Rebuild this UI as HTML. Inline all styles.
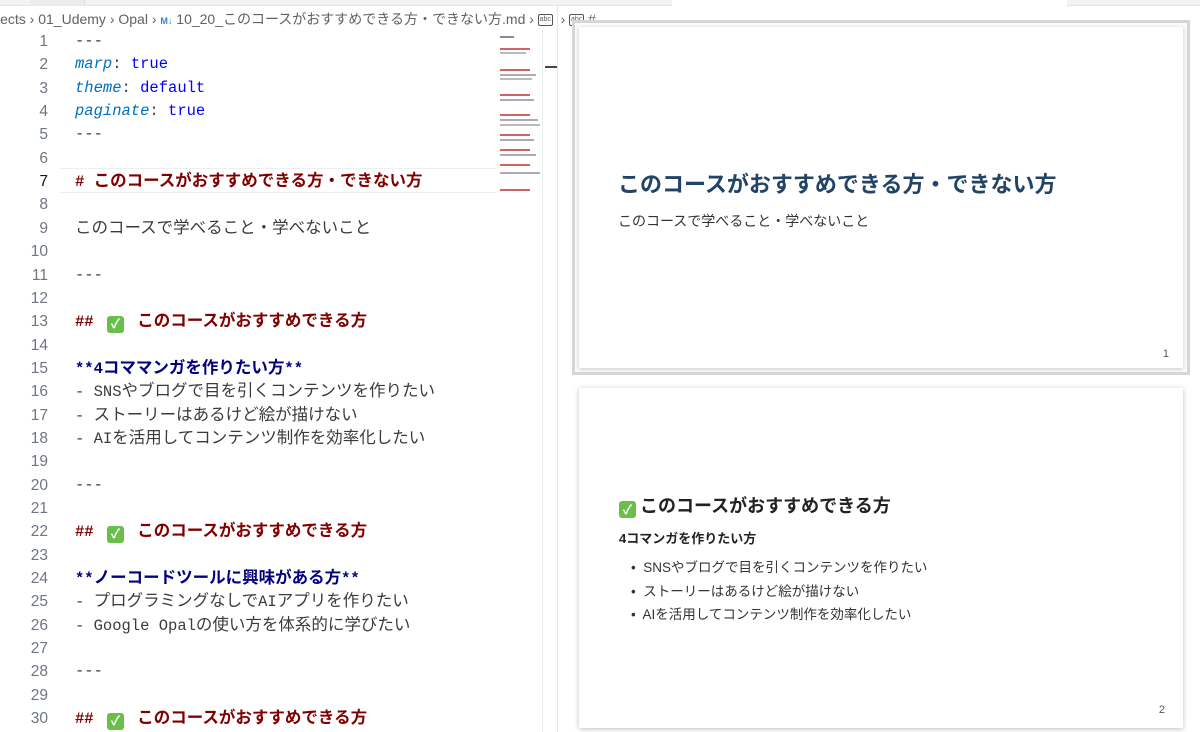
<!DOCTYPE html>
<html><head><meta charset="utf-8"><style>
*{margin:0;padding:0;box-sizing:border-box}
body{width:1200px;height:732px;overflow:hidden;background:#fff;font-family:"Liberation Sans","Noto Sans CJK JP",sans-serif;position:relative}
.tabs{position:absolute;top:0;left:0;width:1200px;height:6px;background:#f3f3f3;border-bottom:1px solid #e5e5e5}
.tabs .t1{position:absolute;left:30px;width:55px;top:0;height:6px;background:#ececec;border-right:1px solid #ddd}
.tabs .t2{position:absolute;left:672px;width:395px;top:0;height:6px;background:#fff}
.bc{position:absolute;top:9px;left:-3px;font-size:14px;color:#616161;white-space:nowrap;height:20px;line-height:20px}
.bc .m{color:#3c7fd8;font-size:9px;font-weight:bold}
.bc .abc{display:inline-block;width:15px;height:12px;border:1px solid #555;font-size:7px;line-height:10px;text-align:center;vertical-align:middle;border-radius:2px}
.ln{position:absolute;left:0;width:48px;text-align:right;color:#6e7681;font-size:15.5px;font-family:"Liberation Sans",sans-serif}
.ln.cur{color:#171717}
.tx{position:absolute;left:75px;white-space:pre;color:#3b3b3b}
.k{color:#0070c1;font-style:italic}.v{color:#0000ff}.h{color:#800000;font-weight:bold}.b{color:#000080;font-weight:bold}
.chk{display:inline-block;width:17px;height:17px;background:#6abf4b;border-radius:3px;color:#fff;font-size:13px;line-height:17px;text-align:center;vertical-align:-2px;font-weight:bold;margin:0 4px}
.curl{position:absolute;left:60px;width:437px;top:168px;height:25px;border-top:1px solid #eee;border-bottom:1px solid #eee}
.mini{position:absolute;left:500px;top:34px;width:42px;height:165px}
.mini i{position:absolute;left:0;height:2px;display:block}
.sbar{position:absolute;left:542px;top:30px;width:15px;height:702px;border-left:1px solid #eee}
.div{position:absolute;left:557px;top:6px;width:1px;height:726px;background:#e5e5e5}
.s1{position:absolute;left:572px;top:20px;width:618px;height:355px;border:3px solid #d6d6d6;background:#fafafa}
.s1 .in{position:absolute;left:4px;top:4px;right:4px;bottom:4px;background:#fff;box-shadow:0 1px 4px rgba(0,0,0,.2)}
.s2{position:absolute;left:579px;top:388px;width:604px;height:340px;background:#fff;box-shadow:0 1px 5px rgba(0,0,0,.25)}
.pn{position:absolute;right:18px;font-size:11px;color:#555}
</style></head><body>
<div class="tabs"><div class="t1"></div><div class="t2"></div></div>
<div class="bc">jects › 01_Udemy › Opal › <span class="m">M↓</span> 10_20_このコースがおすすめできる方・できない方.md › <span class="abc">abc</span> &nbsp;› <span class="abc">abc</span> #</div>
<div class="curl"></div>
<div class="mini">
<i style="top:2px;width:14px;background:#88a;"></i>
<i style="top:14px;width:30px;background:#c66"></i><i style="top:18px;width:26px;background:#bbb"></i>
<i style="top:35px;width:30px;background:#c66"></i><i style="top:40px;width:36px;background:#aab"></i><i style="top:44px;width:32px;background:#bbb"></i>
<i style="top:60px;width:30px;background:#c66"></i><i style="top:65px;width:34px;background:#aab"></i>
<i style="top:80px;width:30px;background:#c66"></i><i style="top:85px;width:38px;background:#aab"></i><i style="top:90px;width:40px;background:#bbb"></i>
<i style="top:100px;width:30px;background:#c66"></i><i style="top:105px;width:34px;background:#aab"></i>
<i style="top:115px;width:30px;background:#c66"></i><i style="top:120px;width:36px;background:#aab"></i>
<i style="top:130px;width:30px;background:#c66"></i><i style="top:138px;width:40px;background:#aab"></i>
<i style="top:155px;width:30px;background:#c66"></i>
</div>
<div class="sbar"><div style="position:absolute;left:2px;top:36px;width:12px;height:2px;background:#444"></div></div>
<div class="div"></div>
<div class="s1"><div class="in">
<div style="position:absolute;left:39px;top:140px;font-size:22px;font-weight:bold;color:#224466">このコースがおすすめできる方・できない方</div>
<div style="position:absolute;left:39px;top:184px;font-size:14px;color:#333">このコースで学べること・学べないこと</div>
<div class="pn" style="bottom:8px;right:14px">1</div>
</div></div>
<div class="s2">
<div style="position:absolute;left:40px;top:104px;font-size:18px;font-weight:bold;color:#222"><span class="chk" style="margin:0 4px 0 0">✓</span>このコースがおすすめできる方</div>
<div style="position:absolute;left:40px;top:140px;font-size:13px;font-weight:bold;color:#222">4コマンガを作りたい方</div>
<div style="position:absolute;left:52px;top:168px;font-size:13.5px;color:#333;line-height:23.5px">
<div>•&nbsp; SNSやブログで目を引くコンテンツを作りたい</div>
<div>•&nbsp; ストーリーはあるけど絵が描けない</div>
<div>•&nbsp; AIを活用してコンテンツ制作を効率化したい</div>
</div>
<div class="pn" style="bottom:12px">2</div>
</div>
<div style="position:absolute;left:0;top:30px;width:557px;font-family:'Liberation Mono','Noto Sans CJK JP',monospace;font-size:15.5px">
<script>
var L=['---','<span class="k">marp</span>: <span class="v">true</span>','<span class="k">theme</span>: <span class="v">default</span>','<span class="k">paginate</span>: <span class="v">true</span>','---','','<span class="h"># このコースがおすすめできる方・できない方</span>','','このコースで学べること・学べないこと','','---','',
'<span class="h">## <span class="chk">✓</span> このコースがおすすめできる方</span>','','<span class="b">**4コママンガを作りたい方**</span>','- SNSやブログで目を引くコンテンツを作りたい','- ストーリーはあるけど絵が描けない','- AIを活用してコンテンツ制作を効率化したい','','---','',
'<span class="h">## <span class="chk">✓</span> このコースがおすすめできる方</span>','','<span class="b">**ノーコードツールに興味がある方**</span>','- プログラミングなしでAIアプリを作りたい','- Google Opalの使い方を体系的に学びたい','','---','','<span class="h">## <span class="chk">✓</span> このコースがおすすめできる方</span>'];
for(var i=0;i<30;i++){var y=i*23.35;var t=L[i].replace(/([\u3000-\u9fff\u30fc\uff00-\uffef]+)/g,'<span style="font-size:16.5px">$1</span>');document.write('<div class="ln'+(i==6?' cur':'')+'" style="top:'+y+'px;height:23px;line-height:23px">'+(i+1)+'</div><div class="tx" style="top:'+y+'px;height:23px;line-height:23px">'+t+'</div>');}
</script>
</div>
</body></html>
